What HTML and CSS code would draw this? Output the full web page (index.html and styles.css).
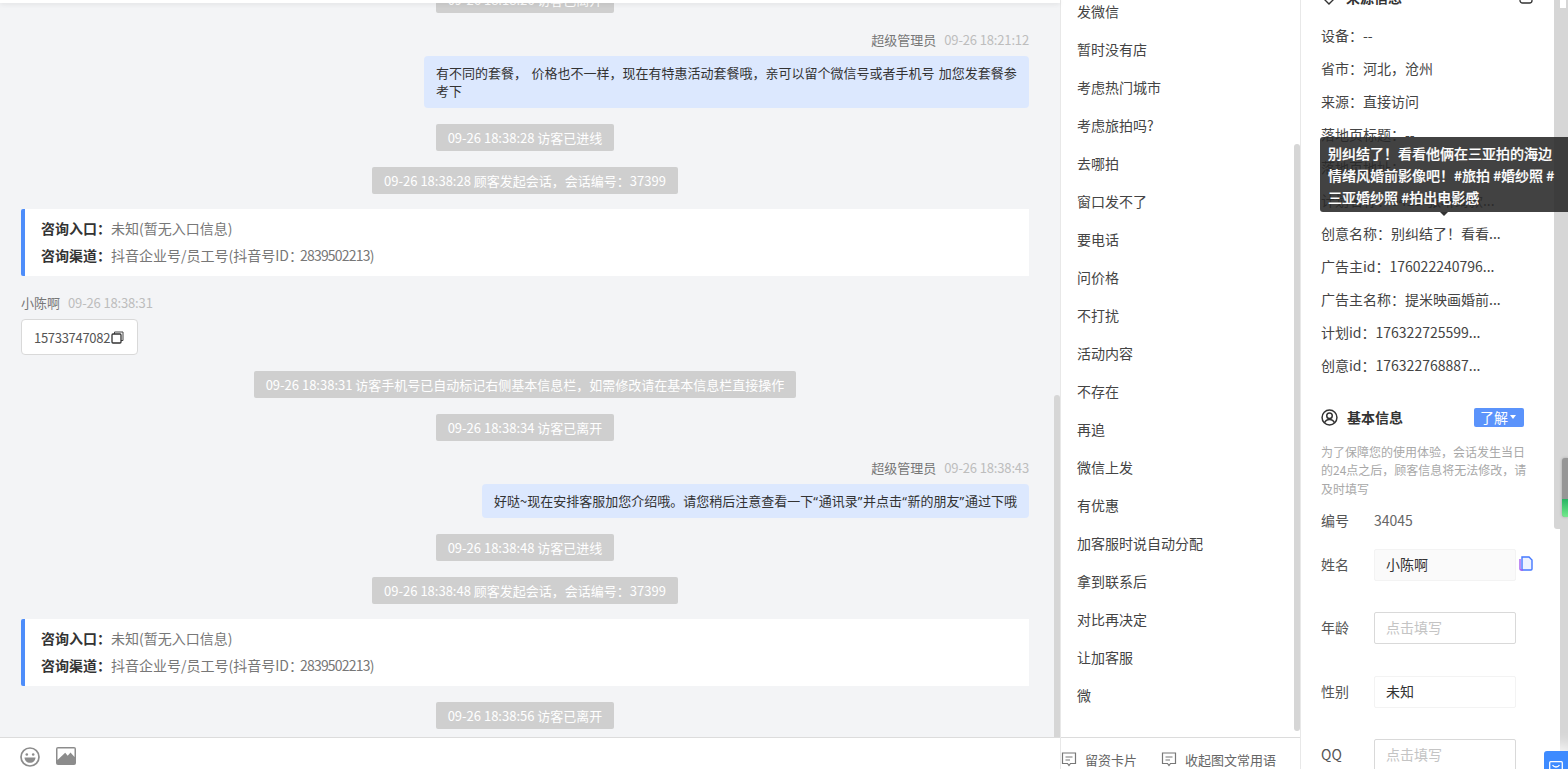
FILE: index.html
```html
<!DOCTYPE html>
<html lang="zh">
<head>
<meta charset="utf-8">
<title>会话</title>
<link rel="stylesheet" href="styles.css">
</head>
<body>
<div class="app">
  <section class="chat">
    <div class="topshade"></div>
    <div class="chat-scroll">
      <div class="chat-flow">
        <div class="sys"><span class="pill">09-26 18:18:26 访客已离开</span></div>
        <div class="meta right m1"><span class="who">超级管理员</span><span class="time">09-26 18:21:12</span></div>
        <div class="bubble-row"><div class="bubble wide">有不同的套餐，  价格也不一样，现在有特惠活动套餐哦，亲可以留个微信号或者手机号 加您发套餐参考下</div></div>
        <div class="sys s1"><span class="pill">09-26 18:38:28 访客已进线</span></div>
        <div class="sys s2"><span class="pill">09-26 18:38:28 顾客发起会话，会话编号：37399</span></div>
        <div class="card c1">
          <p><b>咨询入口：</b>未知(暂无入口信息)</p>
          <p><b>咨询渠道：</b>抖音企业号/员工号(抖音号ID：<span class="num">2839502213</span>)</p>
        </div>
        <div class="meta left"><span class="who">小陈啊</span><span class="time">09-26 18:38:31</span></div>
        <div class="phone">15733747082<svg class="copy" viewBox="0 0 13 13" width="13" height="13"><path d="M3.500 3V1h8.500v8.500h-2" fill="none" stroke="#444" stroke-width="1"/><rect x="1" y="3" width="9" height="9" rx="1" fill="none" stroke="#333" stroke-width="1.300"/></svg></div>
        <div class="sys s3"><span class="pill">09-26 18:38:31 访客手机号已自动标记右侧基本信息栏，如需修改请在基本信息栏直接操作</span></div>
        <div class="sys s2"><span class="pill">09-26 18:38:34 访客已离开</span></div>
        <div class="meta right m2"><span class="who">超级管理员</span><span class="time">09-26 18:38:43</span></div>
        <div class="bubble-row"><div class="bubble">好哒~现在安排客服加您介绍哦。请您稍后注意查看一下<span class="q">“</span>通讯录<span class="q">”</span>并点击<span class="q">“</span>新的朋友<span class="q">”</span>通过下哦</div></div>
        <div class="sys s4"><span class="pill">09-26 18:38:48 访客已进线</span></div>
        <div class="sys s5"><span class="pill">09-26 18:38:48 顾客发起会话，会话编号：37399</span></div>
        <div class="card c2">
          <p><b>咨询入口：</b>未知(暂无入口信息)</p>
          <p><b>咨询渠道：</b>抖音企业号/员工号(抖音号ID：<span class="num">2839502213</span>)</p>
        </div>
        <div class="sys s6"><span class="pill">09-26 18:38:56 访客已离开</span></div>
      </div>
      <div class="thumb chat-thumb"></div>
    </div>
    <div class="toolbar">
      <svg class="tool-ic" viewBox="0 0 20 20" width="20" height="20"><circle cx="10" cy="10" r="9" fill="none" stroke="#8c8c8c" stroke-width="1.700"/><circle cx="6.800" cy="7.500" r="1.300" fill="#8c8c8c"/><circle cx="13.200" cy="7.500" r="1.300" fill="#8c8c8c"/><path d="M4.500 10.500h11c0 3-2.400 5.300-5.500 5.300s-5.500-2.300-5.500-5.300z" fill="#8c8c8c"/></svg>
      <svg class="tool-ic" viewBox="0 0 20 18" width="20" height="18"><rect width="20" height="18" rx="2" fill="#8c8c8c"/><path d="M1.500 1.500h17v8.500l-4-4.500-2.800 3.200-2.500-3-7.700 7.300z" fill="#fff"/></svg>
    </div>
  </section>

  <section class="phrases">
    <div class="phrase-scroll">
      <ul class="phrase-list">
        <li>发微信</li><li>暂时没有店</li><li>考虑热门城市</li><li>考虑旅拍吗?</li><li>去哪拍</li><li>窗口发不了</li><li>要电话</li><li>问价格</li><li>不打扰</li><li>活动内容</li><li>不存在</li><li>再追</li><li>微信上发</li><li>有优惠</li><li>加客服时说自动分配</li><li>拿到联系后</li><li>对比再决定</li><li>让加客服</li><li>微</li>
      </ul>
      <div class="thumb phrase-thumb"></div>
    </div>
    <div class="phrase-foot">
      <span class="foot-item"><svg viewBox="0 0 16 15" width="16" height="15"><path d="M1.500 1h13v10.500H9.500L8 13.500l-1.500-2h-5z" fill="none" stroke="#777" stroke-width="1.200"/><path d="M4.500 5h7M4.500 8h4.500" stroke="#777" stroke-width="1.200"/></svg>留资卡片</span>
      <span class="foot-item"><svg viewBox="0 0 16 15" width="16" height="15"><path d="M1.500 1h13v10.500H9.500L8 13.500l-1.500-2h-5z" fill="none" stroke="#777" stroke-width="1.200"/><path d="M4.500 5h7M4.500 8h4.500" stroke="#777" stroke-width="1.200"/></svg>收起图文常用语</span>
    </div>
  </section>

  <section class="info">
    <div class="info-body">
      <div class="info-head cut-head">
        <svg viewBox="0 0 16 16" width="16" height="16"><path d="M8 15 1.500 8.500V4L4 1.500h8L14.500 4v4.500z" fill="none" stroke="#333" stroke-width="1.400"/></svg>
        <h3>来源信息</h3>
        <svg class="head-end" viewBox="0 0 14 14" width="14" height="14"><rect x="1" y="1" width="12" height="12" rx="2.500" fill="none" stroke="#333" stroke-width="1.300"/></svg>
      </div>
      <ul class="source-list">
        <li>设备：--</li>
        <li>省市：河北，沧州</li>
        <li>来源：直接访问</li>
        <li>落地页标题：--</li>
        <li>落地页地址：</li>
        <li>计划名称：0415-张琳绮款...</li>
        <li>创意名称：别纠结了！看看...</li>
        <li>广告主id：176022240796...</li>
        <li>广告主名称：提米映画婚前...</li>
        <li>计划id：176322725599...</li>
        <li>创意id：176322768887...</li>
      </ul>
      <div class="info-head basic-head">
        <svg viewBox="0 0 16 16" width="17" height="17"><circle cx="8" cy="8" r="7" fill="none" stroke="#333" stroke-width="1.400"/><circle cx="8" cy="6.300" r="2.600" fill="none" stroke="#333" stroke-width="1.400"/><path d="M3.300 13c.8-2.200 2.500-3.200 4.700-3.200s3.900 1 4.700 3.200" fill="none" stroke="#333" stroke-width="1.400"/></svg>
        <h3>基本信息</h3>
        <span class="learn">了解<i class="caret"></i></span>
      </div>
      <p class="notice">为了保障您的使用体验，会话发生当日的24点之后，顾客信息将无法修改，请及时填写</p>
      <div class="field f-id"><label>编号</label><span class="value">34045</span></div>
      <div class="field f-name"><label>姓名</label><span class="box filled">小陈啊</span>
        <svg class="doc" viewBox="0 0 14 15" width="14" height="15"><path d="M3 1h7l3 3v9a1 1 0 0 1-1 1H3z" fill="#eef2ff" stroke="#4478ff" stroke-width="1.400"/><path d="M1 3v10a1 1 0 0 0 1 1h2" fill="none" stroke="#a35cf0" stroke-width="1.400"/></svg>
      </div>
      <div class="field f-age"><label>年龄</label><span class="box empty">点击填写</span></div>
      <div class="field f-sex"><label>性别</label><span class="box select">未知</span></div>
      <div class="field f-qq"><label>QQ</label><span class="box empty">点击填写</span></div>
    </div>
    <div class="tooltip">别纠结了！看看他俩在三亚拍的海边情绪风婚前影像吧！#旅拍 #婚纱照 #三亚婚纱照 #拍出电影感</div>
    <div class="inner-thumb"></div>
    <div class="outer-rail"><i class="notch"></i></div>
    <div class="level"><i class="level-fill"></i></div>
    <button class="float-btn" aria-label="消息"><svg viewBox="0 0 14 12" width="14" height="12"><rect x=".7" y=".7" width="12.600" height="10.600" rx="1" fill="none" stroke="#fff" stroke-width="1.300"/><path d="M3.500 4c1 1.500 2 2 3.500 2s2.500-.5 3.500-2" fill="none" stroke="#fff" stroke-width="1.300"/></svg></button>
  </section>
</div>
</body>
</html>
```
FILE: styles.css
```css
* { box-sizing: border-box; }
html, body { margin: 0; height: 100%; overflow: hidden; }
body { font-family: "Noto Sans CJK SC", "Noto Sans", sans-serif; font-size: 14px; color: #333; background: #fff; }
ul { list-style: none; margin: 0; padding: 0; }
p, h3 { margin: 0; }
.app { display: flex; width: 1568px; height: 769px; }

.chat { width: 1061px; height: 769px; display: flex; flex-direction: column; background: #f3f4f6; position: relative; border-right: 1px solid #e8e8e8; }
.topshade { position: absolute; z-index: 2; left: 0; right: 0; top: 0; height: 3px; background: #fff; box-shadow: 0 1px 5px rgba(0,0,0,.1); }
.chat-scroll { flex: 1; position: relative; overflow: hidden; min-height: 0; }
.chat-flow { margin-top: -14px; padding: 0 31px 0 21px; font-size: 13px; }
.sys { display: flex; justify-content: center; }
.pill { display: block; height: 27px; line-height: 27px; padding: 0 12px; background: #cfcfcf; color: #fff; border-radius: 2px; font-size: 13px; white-space: nowrap; }
.sys.s1, .sys.s2, .sys.s3, .sys.s4, .sys.s5, .sys.s6 { margin-top: 16px; }
.meta { display: flex; gap: 8px; height: 20px; line-height: 20px; font-size: 13px; }
.meta.right { justify-content: flex-end; }
.meta.m1, .meta.m2, .meta.left { margin-top: 17px; }
.who { color: #777; }
.time { color: #bdbdbd; letter-spacing: -.15px; }
.bubble-row { display: flex; justify-content: flex-end; margin-top: 6px; }
.bubble { background: #dce8fe; border-radius: 4px; padding: 8px 12px; line-height: 18px; color: #333; white-space: nowrap; height: 34px; }
.bubble.wide { width: 605px; height: 52px; padding: 8px 10px 8px 12px; white-space: normal; word-spacing: 1.500px; }
.q { font-family: "Noto Sans", sans-serif; letter-spacing: .75px; }
.card { margin-top: 15px; height: 67px; background: #fff; border-left: 4px solid #4d8dfa; border-radius: 2px 0 0 2px; padding: 6px 16px; color: #777; font-size: 14px; }
.card p { height: 27px; line-height: 27px; }
.card b { color: #333; font-weight: 700; }
.num { letter-spacing: -.8px; margin-left: -3px; }
.phone { display: inline-flex; align-items: center; margin-top: 6px; width: 117px; height: 36px; padding-left: 12px; background: #fff; border: 1px solid #d9d9d9; border-radius: 4px; color: #555; letter-spacing: -.3px; }
.copy { flex: none; margin-left: 1px; }
.thumb { position: absolute; width: 6px; background: #d6d6d6; border-radius: 3px 3px 0 0; }
.chat-thumb { right: 0; top: 395px; bottom: 0; }
.toolbar { height: 32px; flex: none; background: #fff; border-top: 1px solid #dcdcdc; display: flex; align-items: flex-start; gap: 16px; padding: 9px 0 0 20px; }

.phrases { width: 240px; height: 769px; display: flex; flex-direction: column; border-right: 1px solid #e8e8e8; background: #fff; }
.phrase-scroll { flex: 1; position: relative; overflow: hidden; min-height: 0; }
.phrase-list { margin-top: -8px; padding-left: 16px; }
.phrase-list li { height: 38px; line-height: 38px; color: #444; }
.phrase-thumb { right: 0; top: 144px; height: 587px; border-radius: 3px; }
.phrase-foot { height: 32px; flex: none; border-top: 1px solid #dcdcdc; display: flex; gap: 24px; padding: 12px 24px 0 0; justify-content: flex-end; font-size: 13px; }
.foot-item { display: inline-flex; align-items: center; gap: 8px; height: 18px; color: #666; }

.info { flex: 1; position: relative; height: 769px; overflow: hidden; background: #fff; }
.info-body { padding-left: 20px; width: 253px; }
.info-head { display: flex; align-items: center; gap: 9px; height: 20px; }
.info-head h3 { font-size: 14px; font-weight: 700; color: #333; }
.cut-head { margin-top: -13px; position: relative; }
.head-end { margin-left: auto; margin-right: 21px; }
.source-list { margin-top: 12px; }
.source-list li { height: 33px; line-height: 33px; color: #444; white-space: nowrap; }
.basic-head { margin-top: 25px; }
.learn { margin-left: auto; margin-right: 30px; width: 50px; height: 19px; padding-left: 6px; background: #5b93fb; color: #fff; border-radius: 2px; display: flex; align-items: center; gap: 2px; font-size: 14px; }
.caret { width: 0; height: 0; border-left: 3.500px solid transparent; border-right: 3.500px solid transparent; border-top: 4px solid #fff; }
.notice { margin-top: 16px; width: 212px; font-size: 12px; line-height: 18.300px; color: #a8a8a8; }
.field { display: flex; align-items: center; color: #555; font-size: 14px; }
.field label { width: 53px; flex: none; margin-top: -2px; }
.value { color: #666; font-size: 14px; }
.f-id label { margin-top: 0; }
.box { display: block; width: 142px; height: 32px; line-height: 28px; padding-left: 11px; border: 1px solid #dcdcdc; border-radius: 2px; font-size: 14px; }
.box.filled { background: #fafafa; border-color: #f3f3f3; color: #333; }
.box.select { border-color: #f3f3f3; color: #333; }
.box.empty { color: #c4c4c4; border-color: #d9d9d9; }
.f-id { margin-top: 12px; height: 20px; }
.f-name { margin-top: 19px; }
.doc { margin-left: 3px; margin-top: -2px; }
.f-age { margin-top: 31px; }
.f-sex { margin-top: 32px; }
.f-qq { margin-top: 31px; }

.tooltip { position: absolute; z-index: 5; left: 19px; top: 137px; width: 249px; height: 75px; padding: 5px 6px 5px 8px; background: rgba(40,40,40,.88); color: #fff; font-size: 14px; font-weight: 500; -webkit-text-stroke: .2px #fff; line-height: 22px; border-radius: 3px 0 0 3px; }
.tooltip::after { content: ""; position: absolute; left: 120px; bottom: -4px; border-left: 4px solid transparent; border-right: 4px solid transparent; border-top: 4px solid #333; }
.inner-thumb { position: absolute; z-index: 3; right: 8px; top: 0; width: 6px; height: 529px; background: #d6d6d6; border-radius: 0 0 0 3px; }
.outer-rail { position: absolute; z-index: 3; right: 0; top: 0; width: 8px; height: 769px; background: #d6d6d6; }
.notch { display: block; width: 6px; height: 8px; background: #fff; }
.level { position: absolute; z-index: 4; right: 0; top: 458px; width: 6px; height: 59px; background: #969696; border-radius: 3px 0 0 3px; box-shadow: 0 0 3px rgba(0,0,0,.25); overflow: hidden; }
.level-fill { position: absolute; left: 0; right: 0; bottom: 0; height: 18px; background: linear-gradient(#27b463, #74ea8c); }
.float-btn { position: absolute; z-index: 6; right: 0; top: 751px; width: 24px; height: 18px; padding: 10px 0 0; border: 0; background: #3e8bff; border-radius: 3px 0 0 0; overflow: hidden; display: flex; justify-content: center; align-items: flex-start; box-shadow: 0 0 14px 6px rgba(255,255,255,.8); }
```
